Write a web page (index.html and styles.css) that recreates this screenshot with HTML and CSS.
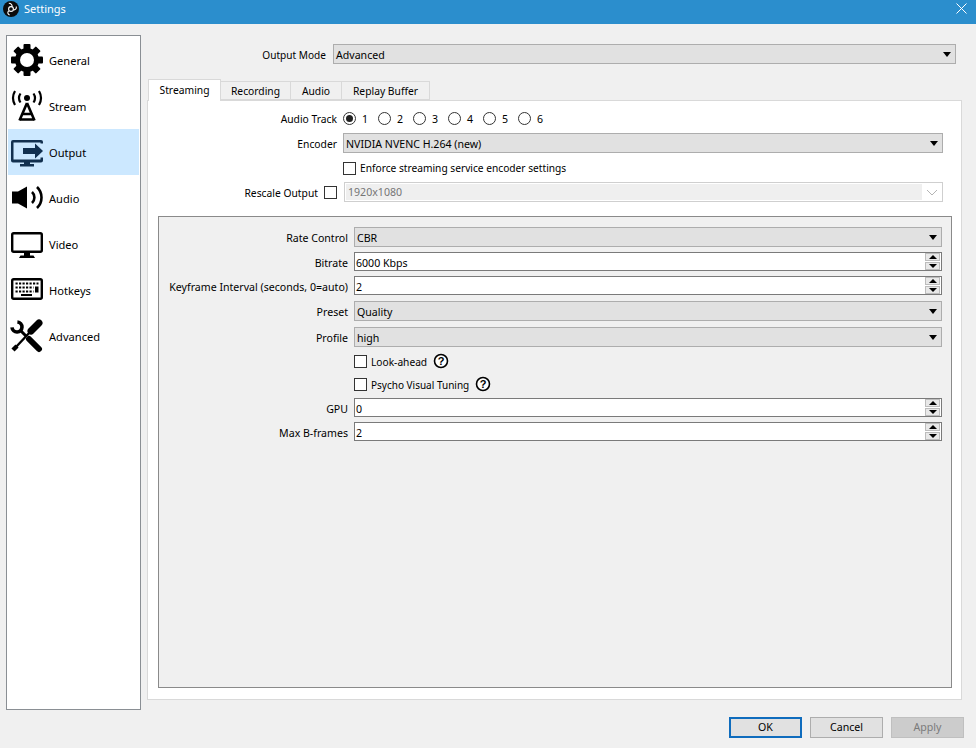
FILE: index.html
```html
<!DOCTYPE html>
<html lang="en">
<head>
<meta charset="utf-8">
<title>Settings</title>
<link rel="stylesheet" href="styles.css">
</head>
<body>
<div class="window">
  <header class="titlebar">
    <svg class="obs" viewBox="0 0 16 16"><circle cx="8" cy="8" r="8" fill="#0c0c0c"/><g fill="none" stroke="#fff" stroke-width="1.100"><circle cx="8" cy="8" r="2.400"/><path d="M9 5.800C9.500 3.800 8 2.300 5.800 2.300M10.300 8.700C12.300 9.300 13.700 7.800 13.300 5.500M5.800 9.800C4.200 11.200 4.600 13.200 6.600 14"/></g></svg>
    <span class="title">Settings</span>
    <svg class="close" viewBox="0 0 11 11"><path d="M.5.500l10 10M10.500.500l-10 10" stroke="#fff" stroke-width="1" fill="none"/></svg>
  </header>
  <main class="main">
    <nav class="sidebar">
      <div class="nav-item">
        <svg class="nav-icon" viewBox="0 0 34 34"><g fill="#000"><circle cx="17" cy="17" r="12"/><rect x="13.500" y="1" width="7" height="32" rx="1"/><rect x="13.500" y="1" width="7" height="32" rx="1" transform="rotate(45 17 17)"/><rect x="13.500" y="1" width="7" height="32" rx="1" transform="rotate(90 17 17)"/><rect x="13.500" y="1" width="7" height="32" rx="1" transform="rotate(135 17 17)"/></g><circle cx="17" cy="17" r="7" fill="#fff"/></svg>
        <span>General</span>
      </div>
      <div class="nav-item">
        <svg class="nav-icon" viewBox="0 0 34 34"><circle cx="17" cy="9" r="3"/><path d="M10.500 4.500a8 8 0 0 0 0 9M23.500 4.500a8 8 0 0 1 0 9M5 2a14 14 0 0 0 0 14M29 2a14 14 0 0 1 0 14" fill="none" stroke="#000" stroke-width="2.200"/><path d="M17 14L9.500 31.500M17 14l7.500 17.500M12 25h10M10 30.500h14" fill="none" stroke="#000" stroke-width="2.600"/></svg>
        <span>Stream</span>
      </div>
      <div class="nav-item active">
        <svg class="nav-icon" viewBox="0 0 34 34"><path d="M3 5h28a2 2 0 0 1 2 2v1.500h-2.500V7.500h-27v17h27v-2h2.500v3a2 2 0 0 1-2 2H3a2 2 0 0 1-2-2V7a2 2 0 0 1 2-2z" fill="#12304f"/><rect x="14" y="27" width="6" height="2.500" fill="#12304f"/><rect x="10" y="29" width="14" height="2.500" fill="#12304f"/><rect x="13" y="13" width="12" height="6" fill="#12304f"/><path d="M25 8.500l8 7.500-8 7.500z" fill="#12304f"/></svg>
        <span>Output</span>
      </div>
      <div class="nav-item">
        <svg class="nav-icon" viewBox="0 0 34 34"><path d="M2 10.500h6l9-5v22l-9-5H2z"/><path d="M22 11a7.500 7.500 0 0 1 0 11M27 6a14.500 14.500 0 0 1 0 21" fill="none" stroke="#000" stroke-width="2.600"/></svg>
        <span>Audio</span>
      </div>
      <div class="nav-item">
        <svg class="nav-icon" viewBox="0 0 34 34"><rect x="2.200" y="6.200" width="29.600" height="18.600" rx="1.500" fill="#fff" stroke="#000" stroke-width="2.400"/><path d="M14 26h6v2.500h-6zM10.500 28.500h13l1.500 2.500H9z"/></svg>
        <span>Video</span>
      </div>
      <div class="nav-item">
        <svg class="nav-icon" viewBox="0 0 34 34"><rect x="2.200" y="6.200" width="29.600" height="19.600" rx="1.500" fill="#fff" stroke="#000" stroke-width="2.400"/><path d="M5.500 10.500h23M5.500 14.500h18M5.500 18.500h18" stroke="#000" stroke-width="2" stroke-dasharray="2.200 1.300" fill="none"/><rect x="25" y="13.500" width="3.500" height="6"/><rect x="11" y="21" width="11" height="2"/></svg>
        <span>Hotkeys</span>
      </div>
      <div class="nav-item">
        <svg class="nav-icon" viewBox="0 0 34 34" fill="none" stroke="#000"><path d="M2 8.400A5 5 0 1 0 7.400 3" stroke-width="3.600"/><path d="M11 12l5 5" stroke-width="3"/><path d="M19 20l10 10" stroke-width="6" stroke-linecap="round"/><path d="M29 4l-8 8" stroke-width="7" stroke-linecap="round"/><path d="M21 12L6 28" stroke-width="2.400"/><path d="M7 27l-4 4" stroke-width="4.500"/></svg>
        <span>Advanced</span>
      </div>
    </nav>
    <section class="content">
      <div class="mode-row">
        <label class="mode-label">Output Mode</label>
        <div class="combo mode-combo"><span>Advanced</span><i class="arrow"></i></div>
      </div>
      <div class="tabs">
        <div class="tab selected">Streaming</div>
        <div class="tab t-rec">Recording</div>
        <div class="tab t-aud">Audio</div>
        <div class="tab t-rep">Replay Buffer</div>
      </div>
      <div class="pane">
        <div class="top-form">
          <label class="lbl">Audio Track</label>
          <div class="radios">
            <span class="radio on"></span><span class="rtext">1</span>
            <span class="radio"></span><span class="rtext">2</span>
            <span class="radio"></span><span class="rtext">3</span>
            <span class="radio"></span><span class="rtext">4</span>
            <span class="radio"></span><span class="rtext">5</span>
            <span class="radio"></span><span class="rtext">6</span>
          </div>
          <label class="lbl">Encoder</label>
          <div class="combo"><span>NVIDIA NVENC H.264 (new)</span><i class="arrow"></i></div>
          <span></span>
          <div class="check-row"><span class="check"></span><span class="ctext enforce">Enforce streaming service encoder settings</span></div>
          <div class="lbl rescale"><span>Rescale Output</span><span class="check"></span></div>
          <div class="combo disabled"><span class="dis-fill">1920x1080</span><svg class="chev" viewBox="0 0 12 7"><path d="M1 1l5 5 5-5" fill="none" stroke="#b4b4b4"/></svg></div>
        </div>
        <div class="group">
          <div class="group-form">
            <label class="lbl">Rate Control</label>
            <div class="combo"><span>CBR</span><i class="arrow"></i></div>
            <label class="lbl">Bitrate</label>
            <div class="spin"><span>6000 Kbps</span><div class="spin-btns"><b><i class="up"></i></b><b><i class="down"></i></b></div></div>
            <label class="lbl">Keyframe Interval (seconds, 0=auto)</label>
            <div class="spin"><span>2</span><div class="spin-btns"><b><i class="up"></i></b><b><i class="down"></i></b></div></div>
            <label class="lbl">Preset</label>
            <div class="combo"><span>Quality</span><i class="arrow"></i></div>
            <label class="lbl">Profile</label>
            <div class="combo"><span>high</span><i class="arrow"></i></div>
            <span></span>
            <div class="check-row"><span class="check"></span><span class="ctext">Look-ahead</span>
              <svg class="help" viewBox="0 0 16 16"><circle cx="8" cy="8" r="6.500" fill="#fff" stroke="#000" stroke-width="1.600"/><text x="8" y="11.800" text-anchor="middle" class="help-q">?</text></svg></div>
            <span></span>
            <div class="check-row"><span class="check"></span><span class="ctext psycho">Psycho Visual Tuning</span>
              <svg class="help" viewBox="0 0 16 16"><circle cx="8" cy="8" r="6.500" fill="#fff" stroke="#000" stroke-width="1.600"/><text x="8" y="11.800" text-anchor="middle" class="help-q">?</text></svg></div>
            <label class="lbl">GPU</label>
            <div class="spin"><span>0</span><div class="spin-btns"><b><i class="up"></i></b><b><i class="down"></i></b></div></div>
            <label class="lbl">Max B-frames</label>
            <div class="spin"><span>2</span><div class="spin-btns"><b><i class="up"></i></b><b><i class="down"></i></b></div></div>
          </div>
        </div>
      </div>
    </section>
  </main>
  <footer class="footer">
    <div class="btn default">OK</div>
    <div class="btn">Cancel</div>
    <div class="btn off">Apply</div>
  </footer>
</div>
</body>
</html>
```
FILE: styles.css
```css
* { box-sizing: border-box; }
html, body { margin: 0; padding: 0; }
body {
  width: 976px; height: 748px; overflow: hidden;
  background: #f0f0f0; color: #000;
  font-family: "Noto Sans", "Liberation Sans", sans-serif;
  font-size: 10.6px; line-height: 14px;
}
.window { display: flex; flex-direction: column; height: 748px; }
.titlebar {
  height: 24px; flex: none; background: #2b8ecd; color: #fff;
  display: flex; align-items: flex-start; padding: 1px 9px 0 3px;
}
.obs { width: 16px; height: 16px; }
.title { margin-left: 5px; flex: 1; font-size: 11px; line-height: 15px; }
.close { width: 11px; height: 11px; margin-top: 2px; }

.main { display: flex; height: 687px; padding: 11px 14px 0 6px; flex: none; }
.sidebar {
  width: 135px; height: 675px; flex: none; background: #fff;
  border: 1px solid #8a8f94; padding: 1px;
  display: flex; flex-direction: column;
}
.nav-item { height: 46px; flex: none; display: flex; align-items: center; padding-left: 2px; gap: 5px; }
.nav-item span { font-size: 11.1px; padding-top: 2px; }
.nav-item.active { background: #cce8ff; }
.nav-icon { width: 34px; height: 34px; flex: none; }

.content { flex: 1; margin-left: 6px; min-width: 0; display: flex; flex-direction: column; }
.mode-row { display: flex; align-items: center; height: 20px; margin-top: 9px; }
.mode-label { width: 186px; text-align: right; padding: 2px 7px 0 0; flex: none; font-size: 10.1px; }
.mode-combo { width: 623px; }

.combo {
  height: 20px; background: #e1e1e1; border: 1px solid #adadad;
  display: flex; align-items: center; justify-content: space-between;
  padding: 0 4px 0 2px; min-width: 0;
}
.combo > span, .spin > span { padding-top: 2px; }
.arrow { width: 0; height: 0; border-left: 4px solid transparent; border-right: 4px solid transparent; border-top: 5px solid #000; }
.combo.disabled { background: #fff; border-color: #cfcfcf; padding: 1px 4px 1px 1px; color: #767676; margin-left: 1px; }
.combo > .dis-fill { background: #efefef; height: 16px; flex: 1; padding: 1px 0 0 2px; margin-right: 4px; line-height: 15px; }
.chev { width: 12px; height: 7px; }

.tabs { display: flex; height: 20px; margin-top: 16px; padding-left: 1px; align-items: flex-end; position: relative; z-index: 1; font-size: 10.3px; }
.tab {
  height: 19px; background: #f0f0f0;
  border: 1px solid #d9d9d9; border-left-width: 0;
  line-height: 19px; text-align: center;
}
.t-rec { width: 70px; }
.t-aud { width: 51px; }
.t-rep { width: 88px; }
.tab.selected { height: 22px; margin-bottom: -1px; background: #fff; border-left-width: 1px; border-bottom: 0; width: 73px; line-height: 20px; }
.pane {
  width: 815px; height: 600px; background: #fff; border: 1px solid #d9d9d9;
  padding: 7px 9px 11px 10px; display: flex; flex-direction: column;
}
.top-form {
  display: grid; grid-template-columns: 185px 600px;
  grid-template-rows: 25px 25px 24px 24px; align-items: start;
}
.lbl { text-align: right; padding-right: 6px; line-height: 22px; white-space: nowrap; }
.top-form .lbl { font-size: 10.3px; }
.rescale { display: flex; justify-content: flex-end; align-items: center; gap: 6px; height: 20px; }
.rescale > span:first-child { padding-top: 2px; line-height: 14px; }
.radios { display: flex; align-items: center; height: 20px; }
.radio {
  width: 13px; height: 13px; border-radius: 50%; border: 1px solid #333;
  background: #fff; flex: none; position: relative;
}
.radio.on::after { content: ""; position: absolute; left: 2px; top: 2px; width: 7px; height: 7px; border-radius: 50%; background: #222; }
.rtext { width: 22px; padding: 2px 0 0 6px; flex: none; }
.check-row { display: flex; align-items: center; gap: 4px; height: 20px; }
.ctext { font-size: 10.2px; padding-top: 2px; }
.ctext.enforce { padding-top: 0; }
.ctext.psycho { font-size: 10px; }
.check { width: 13px; height: 13px; border: 1px solid #333; background: #fff; flex: none; }
.help { width: 16px; height: 16px; margin-left: 2px; }
.help-q { font: bold 11px "Liberation Sans", sans-serif; }

.group { width: 794px; height: 472px; margin-top: 10px; border: 1px solid #8a8a8a; background: #f0f0f0; padding: 10px 10px 0 0; flex: none; }
.group-form {
  display: grid; grid-template-columns: 195px 588px;
  grid-template-rows: 25px 24px 25px 26px 24px 23px 24px 24px 20px; align-items: start;
}
.spin {
  height: 19px; background: #fff; border: 1px solid #7a7a7a;
  display: flex; align-items: center; justify-content: space-between; padding: 0 0 0 1px;
}
.spin-btns { width: 15px; height: 17px; display: flex; flex-direction: column; gap: 1px; flex: none; margin-right: 1px; }
.spin-btns b { flex: 1; background: #e8e8e8; border: 1px solid #bcbcbc; display: flex; align-items: center; justify-content: center; }
.up { width: 0; height: 0; border-left: 4px solid transparent; border-right: 4px solid transparent; border-bottom: 4px solid #000; }
.down { width: 0; height: 0; border-left: 4px solid transparent; border-right: 4px solid transparent; border-top: 4px solid #000; }

.footer { height: 37px; flex: none; display: flex; justify-content: flex-end; gap: 8px; padding: 6px 12px 0 0; }
.btn { width: 73px; height: 21px; background: #e1e1e1; border: 1px solid #adadad; text-align: center; line-height: 19px; }
.btn.default { border: 2px solid #0f6cbd; line-height: 17px; }
.btn.off { background: #cccccc; border-color: #bfbfbf; color: #7a7a7a; }
```
